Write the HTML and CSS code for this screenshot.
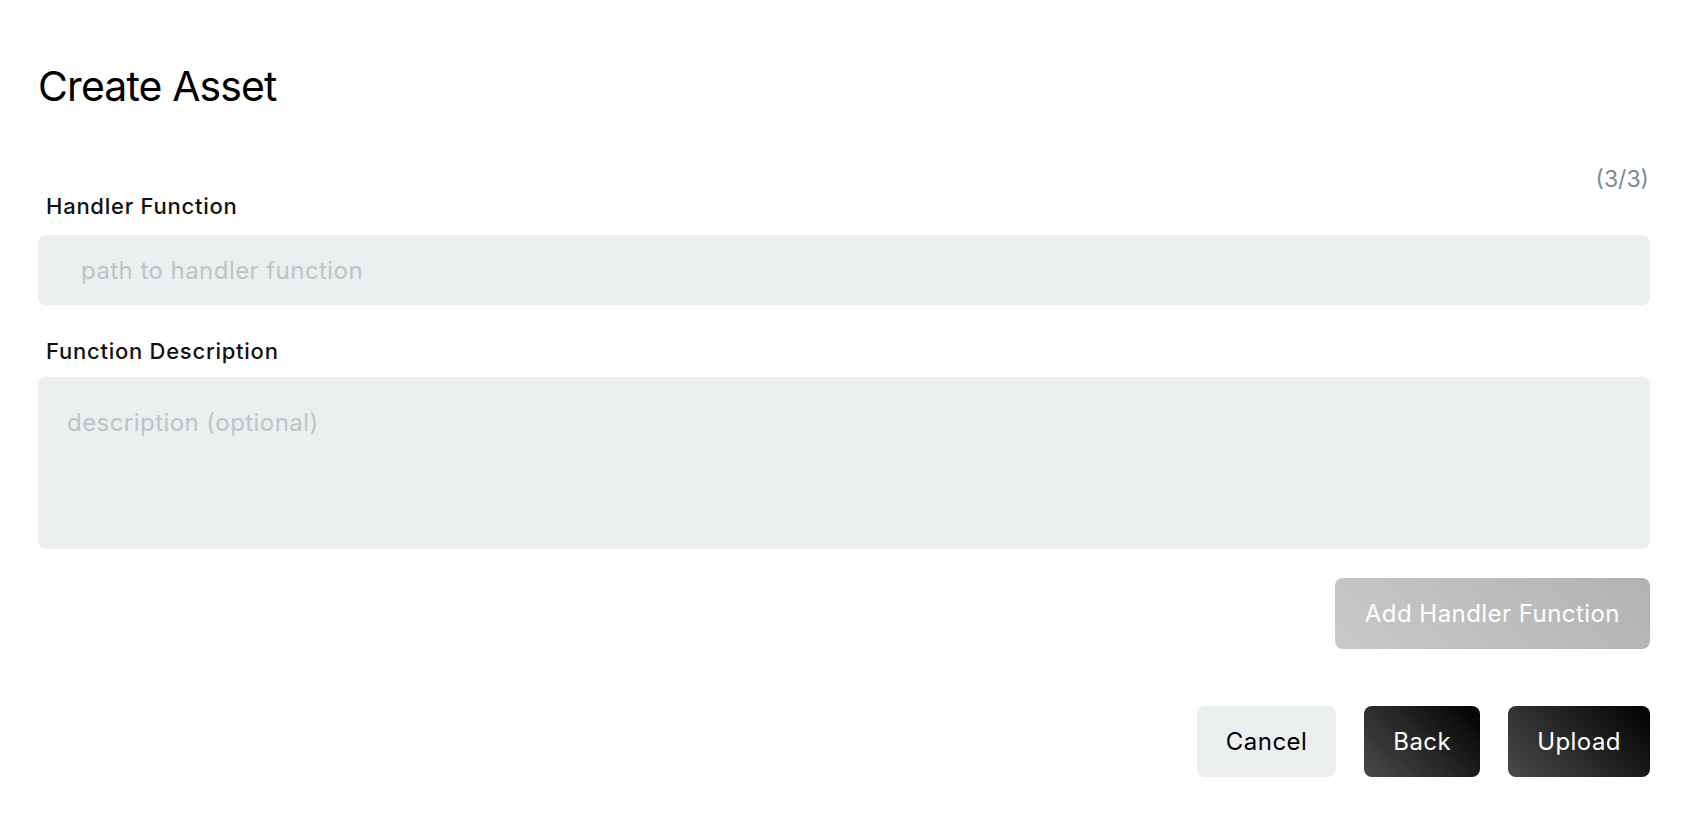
FILE: index.html
```html
<!DOCTYPE html>
<html lang="en">
<head>
<meta charset="utf-8">
<title>Create Asset</title>
<link rel="stylesheet" href="styles.css">
</head>
<body>
<main class="page">
  <h1 class="title">Create Asset</h1>
  <div class="step">(3/3)</div>
  <form class="form">
    <label class="label label-handler" for="handler">Handler Function</label>
    <input class="input" id="handler" type="text" placeholder="path to handler function">
    <label class="label label-desc" for="desc">Function Description</label>
    <textarea class="textarea" id="desc" placeholder="description (optional)"></textarea>
    <div class="add-row">
      <button type="button" class="btn btn-add">Add Handler Function</button>
    </div>
    <div class="actions">
      <button type="button" class="btn btn-light">Cancel</button>
      <button type="button" class="btn btn-dark">Back</button>
      <button type="button" class="btn btn-dark">Upload</button>
    </div>
  </form>
</main>
</body>
</html>
```

FILE: styles.css
```css
* { box-sizing: border-box; }
html, body { margin: 0; padding: 0; background: #fff; }
body {
  font-family: Inter, "Noto Sans", "Liberation Sans", sans-serif;
  color: #000;
}
.page {
  padding: 61px 44px 0 38px;
  display: flex;
  flex-direction: column;
}
.title {
  margin: 0;
  font-size: 41px;
  line-height: 50px;
  font-weight: 400;
  letter-spacing: -0.9px;
}
.step {
  margin-top: 55px;
  align-self: flex-end;
  font-size: 23px;
  line-height: 26px;
  color: #7d8a93;
  margin-right: 1px;
}
.form {
  display: flex;
  flex-direction: column;
}
.label {
  font-size: 22px;
  line-height: 26px;
  font-weight: 550;
  letter-spacing: 0.75px;
  color: #111;
  padding-left: 8px;
}
.label-handler { margin-top: 1px; }
.label-desc { margin-top: 33px; }
.input, .textarea {
  border: none;
  outline: none;
  background: #ebeff0;
  border-radius: 8px;
  font-family: inherit;
  font-size: 24px;
  letter-spacing: 0.45px;
  color: #222;
  width: 100%;
}
.input {
  margin-top: 16px;
  height: 70px;
  padding: 0 20px 0 43px;
}
.textarea {
  margin-top: 13px;
  height: 172px;
  padding: 31px 29px;
  line-height: 29px;
  resize: none;
  display: block;
}
.input::placeholder, .textarea::placeholder { color: #bfc3c5; opacity: 1; }
.add-row {
  display: flex;
  justify-content: flex-end;
  margin-top: 29px;
}
.actions {
  display: flex;
  justify-content: flex-end;
  gap: 28px;
  margin-top: 57px;
}
.btn {
  border: none;
  border-radius: 8px;
  height: 71px;
  padding: 0 29px;
  font-family: inherit;
  font-size: 24px;
  letter-spacing: 0.45px;
  cursor: pointer;
}
.btn-add {
  color: #fff;
  background: linear-gradient(45deg, #c9c9c9 0%, #b2b2b2 100%);
  padding: 0 30px;
}
.btn-light {
  background: #ebeff0;
  color: #000;
}
.btn-dark {
  color: #fff;
  background: linear-gradient(45deg, #4a4a4a 0%, #1e1e1e 60%, #000 100%);
}
```
